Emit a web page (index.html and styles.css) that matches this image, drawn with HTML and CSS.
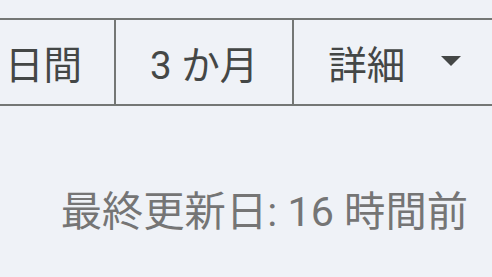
FILE: index.html
```html
<!DOCTYPE html>
<html lang="ja">
<head>
<meta charset="utf-8">
<link rel="stylesheet" href="styles.css">
</head>
<body>
<div class="page">
  <div class="seg">
    <div class="btn first">日間</div>
    <div class="btn">3 か月</div>
    <div class="btn more">詳細
      <svg class="caret" viewBox="0 0 20 10" width="20" height="10"><path d="M0 0h20L10 10z" fill="#444746"/></svg>
    </div>
  </div>
  <div class="updated">最終更新日: 16 時間前</div>
</div>
</body>
</html>
```
FILE: styles.css
```css
html, body {
  margin: 0;
  padding: 0;
  background: #eff2f7;
  overflow: hidden;
}
.page {
  width: 492px;
  height: 277px;
  padding-top: 18px;
  box-sizing: border-box;
  font-family: Roboto, "Noto Sans CJK JP", sans-serif;
  overflow: hidden;
}
.seg {
  display: flex;
  margin-left: -32px;
  margin-right: -60px;
  border-top: 2px solid #747775;
  border-bottom: 2px solid #747775;
  height: 84px;
}
.btn {
  display: flex;
  align-items: center;
  padding: 0 34px;
  font-size: 38.5px;
  color: #444746;
  border-right: 2px solid #747775;
  white-space: nowrap;
}
.btn.first {
  padding-left: 37px;
  padding-right: 32px;
}
.btn.more {
  border-right: none;
  flex: 1;
}
.caret {
  margin-left: 36px;
  margin-top: -2px;
}
.updated {
  margin-top: 86px;
  padding-right: 24px;
  text-align: right;
  font-size: 41.3px;
  line-height: 40px;
  color: #757575;
}
```
